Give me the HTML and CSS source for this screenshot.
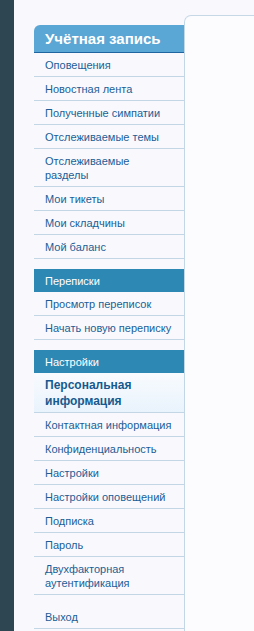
FILE: index.html
```html
<!DOCTYPE html>
<html lang="ru">
<head>
    <meta charset="UTF-8">
    <meta name="viewport" content="width=device-width, initial-scale=1.0">
    <title>Персональная информация</title>
    <link rel="stylesheet" href="styles.css">
</head>
<body>
    <div class="page">
        <div class="edge"></div>

        <div class="content">
            <aside class="sidebar">
                <h3 class="side-title">Учётная запись</h3>
                <ul class="side-list">
                    <li><a href="#">Оповещения</a></li>
                    <li><a href="#">Новостная лента</a></li>
                    <li><a href="#">Полученные симпатии</a></li>
                    <li><a href="#">Отслеживаемые темы</a></li>
                    <li><a href="#">Отслеживаемые разделы</a></li>
                    <li><a href="#">Мои тикеты</a></li>
                    <li><a href="#">Мои складчины</a></li>
                    <li><a href="#">Мой баланс</a></li>
                </ul>

                <h4 class="side-section">Переписки</h4>
                <ul class="side-list">
                    <li><a href="#">Просмотр переписок</a></li>
                    <li><a href="#">Начать новую переписку</a></li>
                </ul>

                <h4 class="side-section">Настройки</h4>
                <ul class="side-list">
                    <li class="active"><a href="#">Персональная информация</a></li>
                    <li><a href="#">Контактная информация</a></li>
                    <li><a href="#">Конфиденциальность</a></li>
                    <li><a href="#">Настройки</a></li>
                    <li><a href="#">Настройки оповещений</a></li>
                    <li><a href="#">Подписка</a></li>
                    <li><a href="#">Пароль</a></li>
                    <li><a href="#">Двухфакторная аутентификация</a></li>
                    <li class="logout"><a href="#">Выход</a></li>
                </ul>
            </aside>

            <main class="panel"></main>
        </div>
    </div>
</body>
</html>
```

FILE: styles.css
```css
body {
    margin: 0;
    font-family: 'Liberation Sans', Arial, sans-serif;
    background-color: #f9f9fd;
    color: #1b5e96;
    overflow: hidden;
}

.page {
    display: flex;
    min-height: 631px;
}

/* dunkler Streifen links */
.edge {
    width: 14px;
    flex-shrink: 0;
    background-color: #2e4651;
}

.content {
    display: flex;
    flex: 1;
    padding-left: 20px;
    padding-top: 15px;
    min-width: 0;
}

.sidebar {
    width: 150px;
    flex-shrink: 0;
    margin-top: 10px;
}

.side-title {
    margin: 0;
    height: 27px;
    padding-left: 11px;
    line-height: 28px;
    font-size: 15px;
    font-weight: bold;
    color: #fff;
    background-color: #5aa6d4;
    border-bottom: 1px solid #1f66a0;
    border-top-left-radius: 6px;
}

.side-section {
    margin: 10px 0 0;
    padding: 5px 10px 4px 11px;
    line-height: 14px;
    font-size: 11px;
    font-weight: normal;
    color: #fff;
    background-color: #2e88b4;
}

.side-list {
    list-style: none;
    margin: 0;
    padding: 0;
}

.side-list li {
    border-bottom: 1px solid #c3d6e6;
}

.side-list a {
    display: block;
    padding: 5px 10px 4px 11px;
    line-height: 14px;
    font-size: 11px;
    color: #1b5e96;
    text-decoration: none;
}

.side-list li.active {
    background: linear-gradient(to bottom, #f8fbfe, #e9f3fc);
}

.side-list li.active a {
    padding: 4px 10px 3px 11px;
    line-height: 16px;
    font-size: 12px;
    font-weight: bold;
    color: #175a8e;
}

.side-list li.logout a {
    padding-top: 15px;
}

/* Inhaltsbereich rechts */
.panel {
    flex: 1;
    background-color: #fcfcff;
    border-top: 1px solid #c6d7e6;
    border-left: 1px solid #c3d6e6;
    border-top-left-radius: 7px;
}
```
